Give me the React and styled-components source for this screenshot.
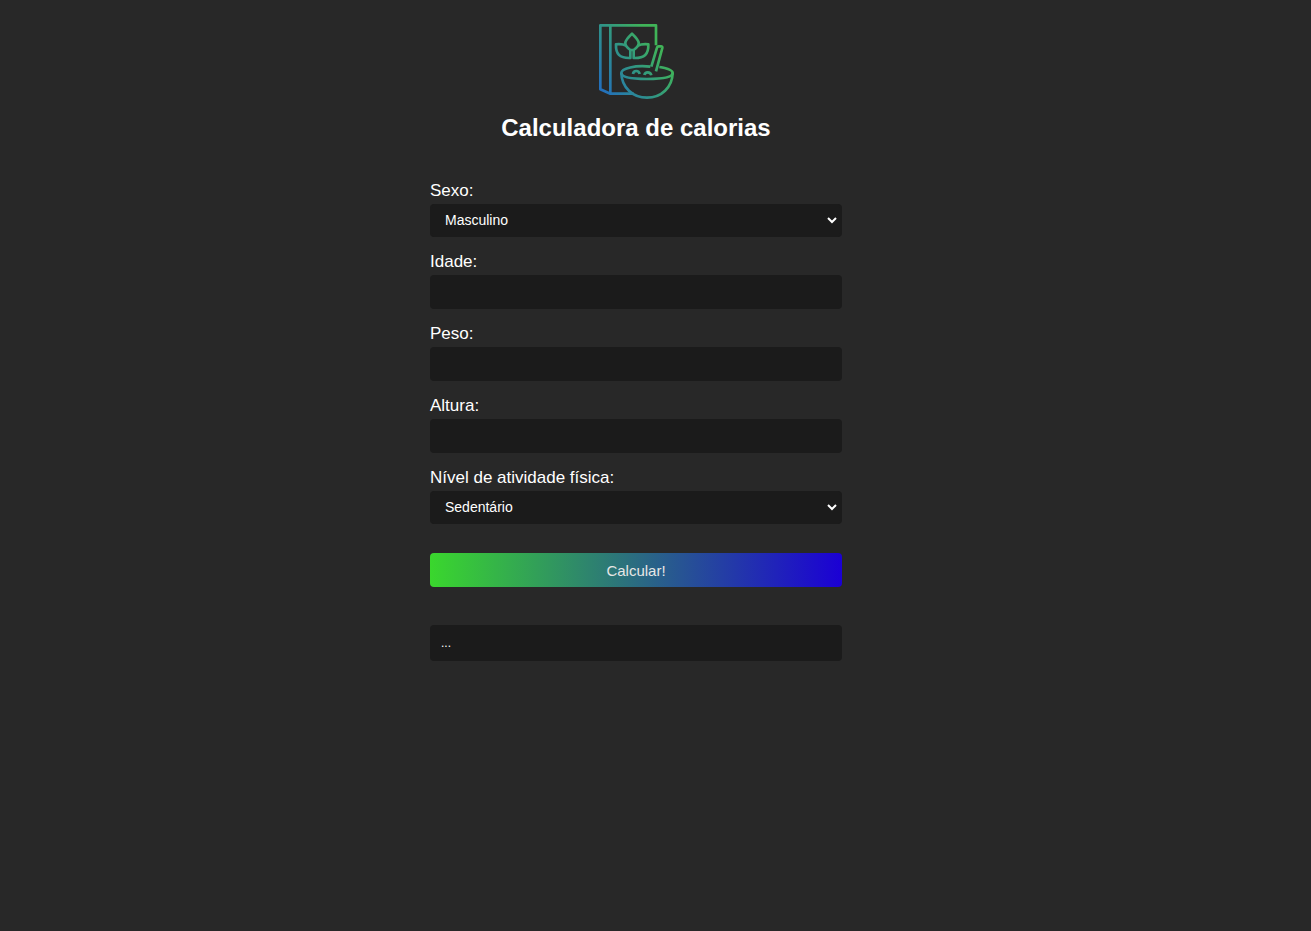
import React, { useState } from "react";
import styled, { createGlobalStyle, css } from "styled-components";

const GlobalStyle = createGlobalStyle`
  *, *::before, *::after { box-sizing: border-box; }
  html { background: #282828; }
  body {
    margin: 0;
    color: #fff;
    font-family: "Liberation Sans", Arial, sans-serif;
  }
`;

const Page = styled.main`
  display: flex;
  flex-direction: column;
  align-items: center;
  padding: 23px 39px 24px 0;
`;

const Logo = styled.svg`
  display: block;
  width: 76px;
  height: 76px;
`;

const Title = styled.h1`
  margin: 15px 0 39px;
  font-size: 24px;
  line-height: 28px;
  text-align: center;
`;

const Form = styled.form`
  display: flex;
  flex-direction: column;
  gap: 15px;
  width: 412px;
  max-width: 100%;
`;

const Field = styled.div`
  display: flex;
  flex-direction: column;
  gap: 3px;
`;

const Label = styled.label`
  font-size: 17px;
  line-height: 20px;
`;

const control = css`
  width: 100%;
  margin: 0;
  border: 0;
  border-radius: 4px;
  background-color: #1b1b1b;
  color: #fff;
  font-family: inherit;
`;

const Select = styled.select`
  ${control}
  height: 33px;
  padding: 0 9px 1px;
  border: solid #1b1b1b;
  border-width: 0 2px;
  font-size: 14px;
`;

const Input = styled.input`
  ${control}
  height: 34px;
  padding: 0 15px;
  font-size: 14px;
`;

const Button = styled.button`
  height: 34px;
  margin: 14px 0 23px;
  padding: 1px 0 0;
  border: 0;
  border-radius: 4px;
  background: linear-gradient(to right, #3ad72d, #1b00d5);
  color: #e6e6e6;
  font-family: inherit;
  font-size: 15px;
  cursor: pointer;
`;

const Result = styled.output`
  ${control}
  display: block;
  padding: 10px 11px;
  font-size: 12px;
  line-height: 16px;
`;

const levels = [
  ["Sedentário", 1.2],
  ["Levemente ativo", 1.375],
  ["Moderadamente ativo", 1.55],
  ["Muito ativo", 1.725],
];

const measures = [
  ["idade", "Idade:"],
  ["peso", "Peso:"],
  ["altura", "Altura:"],
];

function RecipeLogo() {
  return (
    <Logo viewBox="24 24 228 228" fill="none" aria-hidden="true">
      <defs>
        <linearGradient id="leaf" gradientUnits="userSpaceOnUse" x1="40" y1="230" x2="215" y2="110">
          <stop offset="0" stopColor="#2370bc" />
          <stop offset="0.5" stopColor="#2f9288" />
          <stop offset="1" stopColor="#40b458" />
        </linearGradient>
      </defs>
      <g stroke="url(#leaf)" strokeWidth="8" strokeLinejoin="round">
        <path d="M198 91V31H31v192l30 13h70M61 31v205" />
        <path d="M126 56c-26 24-26 34-5 49h10c21-15 21-25-5-49Z" />
        <path d="M108 92c-9-5-19-5-30-4c-1 29 10 42 43 41v-24M144 92c9-5 19-5 31-4c1 29-11 42-44 41v-24" />
        <path d="M184 155l17-57q1-4 5-4h7q5 0 4 5l-19 70" />
        <path d="M181 155c-45-5-87 5-87 19s34 18 77 18s77-4 77-18c0-8-15-14-40-18" />
        <path d="M94 174c1 43 34 74 77 74s76-31 77-74" />
        <path d="M129 177q1-9 10-9q8 0 10 9M163 180q2-8 10-8q9 0 11 9" />
      </g>
    </Logo>
  );
}

export default function App() {
  const [values, setValues] = useState({
    sexo: "Masculino",
    idade: "",
    peso: "",
    altura: "",
    nivel: "Sedentário",
  });
  const [result, setResult] = useState("...");

  const change = (event) =>
    setValues({ ...values, [event.target.name]: event.target.value });

  const calculate = (event) => {
    event.preventDefault();
    const { sexo, idade, peso, altura, nivel } = values;
    if (!idade || !peso || !altura) return;
    const base = 10 * peso + 6.25 * altura - 5 * idade + (sexo === "Masculino" ? 5 : -161);
    const factor = levels.find(([name]) => name === nivel)[1];
    setResult(`${Math.round(base * factor)} kcal`);
  };

  return (
    <>
      <GlobalStyle />
      <Page>
        <RecipeLogo />
        <Title>Calculadora de calorias</Title>
        <Form onSubmit={calculate}>
          <Field>
            <Label htmlFor="sexo">Sexo:</Label>
            <Select id="sexo" name="sexo" value={values.sexo} onChange={change}>
              <option>Masculino</option>
              <option>Feminino</option>
            </Select>
          </Field>
          {measures.map(([name, label]) => (
            <Field key={name}>
              <Label htmlFor={name}>{label}</Label>
              <Input
                id={name}
                name={name}
                inputMode="decimal"
                value={values[name]}
                onChange={change}
              />
            </Field>
          ))}
          <Field>
            <Label htmlFor="nivel">Nível de atividade física:</Label>
            <Select id="nivel" name="nivel" value={values.nivel} onChange={change}>
              {levels.map(([name]) => (
                <option key={name}>{name}</option>
              ))}
            </Select>
          </Field>
          <Button type="submit">Calcular!</Button>
          <Result htmlFor="sexo idade peso altura nivel">{result}</Result>
        </Form>
      </Page>
    </>
  );
}
